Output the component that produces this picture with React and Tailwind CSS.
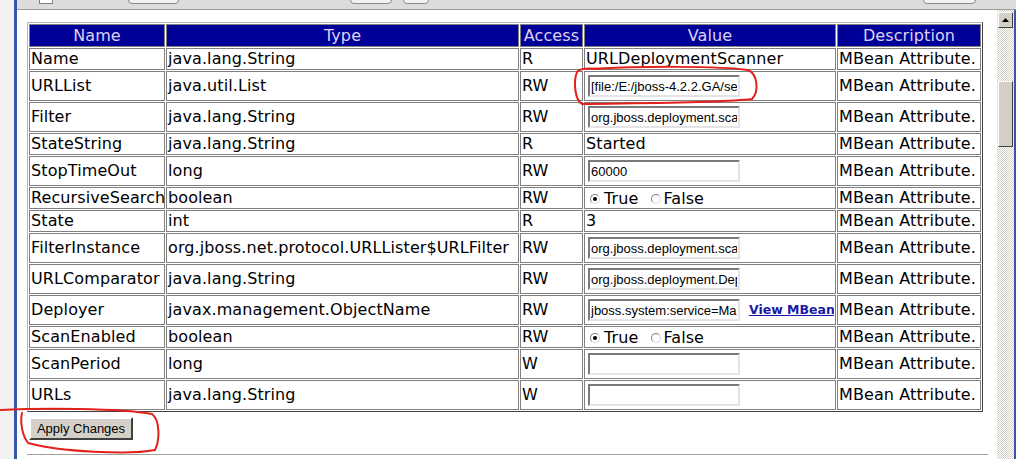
import React from 'react';

const ROWS = [
  { name: 'Name', type: 'java.lang.String', access: 'R', kind: 'text', value: 'URLDeploymentScanner' },
  { name: 'URLList', type: 'java.util.List', access: 'RW', kind: 'input', value: '[file:/E:/jboss-4.2.2.GA/server/default/deploy/]' },
  { name: 'Filter', type: 'java.lang.String', access: 'RW', kind: 'input', value: 'org.jboss.deployment.scanner.DeploymentFilter' },
  { name: 'StateString', type: 'java.lang.String', access: 'R', kind: 'text', value: 'Started' },
  { name: 'StopTimeOut', type: 'long', access: 'RW', kind: 'input', value: '60000' },
  { name: 'RecursiveSearch', type: 'boolean', access: 'RW', kind: 'radio' },
  { name: 'State', type: 'int', access: 'R', kind: 'text', value: '3' },
  { name: 'FilterInstance', type: 'org.jboss.net.protocol.URLLister$URLFilter', access: 'RW', kind: 'input', value: 'org.jboss.deployment.scanner.DeploymentFilter@1a2b3c' },
  { name: 'URLComparator', type: 'java.lang.String', access: 'RW', kind: 'input', value: 'org.jboss.deployment.DeploymentSorter' },
  { name: 'Deployer', type: 'javax.management.ObjectName', access: 'RW', kind: 'input', value: 'jboss.system:service=MainDeployer', link: true },
  { name: 'ScanEnabled', type: 'boolean', access: 'RW', kind: 'radio' },
  { name: 'ScanPeriod', type: 'long', access: 'W', kind: 'input', value: '' },
  { name: 'URLs', type: 'java.lang.String', access: 'W', kind: 'input', value: '' },
];

const cell = 'border border-[#808080] px-[1px] py-0 align-middle whitespace-nowrap text-left leading-[20px]';
const head = 'border border-[#808080] h-[23px] px-[1px] py-0 bg-[#000099] text-[#dcd2f0] font-normal text-center leading-[20px]';

function Radio({ checked }) {
  return (
    <span className="flex items-center justify-center w-[10px] h-[10px] shrink-0 rounded-full border border-t-[#808080] border-l-[#808080] border-b-[#d8d8d8] border-r-[#d8d8d8] bg-white">
      {checked && <span className="w-[4px] h-[4px] rounded-full bg-black" />}
    </span>
  );
}

function TextBox({ value }) {
  return (
    <input
      readOnly
      value={value}
      className="w-[152px] h-[22px] shrink-0 border-2 border-t-[#7a7a7a] border-l-[#7a7a7a] border-b-[#e4e4e4] border-r-[#e4e4e4] bg-white px-[1px] text-[13px] tracking-normal text-black font-['Liberation_Sans',Arial,sans-serif] outline-none"
    />
  );
}

function ValueCell({ row }) {
  if (row.kind === 'text') return <span>{row.value}</span>;
  if (row.kind === 'radio') {
    return (
      <div className="flex items-center h-[20px] ml-[4px] pt-[1px]">
        <Radio checked />
        <span className="ml-[4px]">True</span>
        <span className="ml-[13px]"><Radio /></span>
        <span className="ml-[2px]">False</span>
      </div>
    );
  }
  return (
    <div className="flex items-center h-[28px] ml-[2px] overflow-hidden">
      <TextBox value={row.value} />
      {row.link && (
        <a href="#" className="ml-[9px] text-[12.5px] tracking-normal font-bold text-[#1a1aa6] underline">View MBean</a>
      )}
    </div>
  );
}

export default function App() {
  return (
    <div className="relative w-[1016px] h-[459px] overflow-hidden flex bg-white font-['DejaVu_Sans',Verdana,sans-serif] text-black">
      <div className="w-[14px] bg-[#f2f2f2]" />
      <div className="w-[3px] bg-[#3656a8]" />

      <div className="flex-1 flex flex-col min-w-0">
        {/* toolbar strip, only its bottom edge shows */}
        <div className="h-[10px] shrink-0 bg-[#dcdcdc] border-b border-[#9a9a9a] flex items-end overflow-hidden">
          <div className="ml-[22px] mb-[5px] w-[14px] h-[14px] shrink-0 bg-white border border-[#808080]" />
          <div className="ml-[75px] mb-[5px] w-[51px] h-[16px] shrink-0 bg-[#f2f2f2] border border-[#8a8a8a] rounded-b-[4px]" />
          <div className="ml-[171px] mb-[5px] w-[42px] h-[16px] shrink-0 bg-[#f2f2f2] border border-[#8a8a8a] rounded-b-[4px]" />
          <div className="ml-[11px] mb-[5px] w-[26px] h-[16px] shrink-0 bg-[#f2f2f2] border border-[#8a8a8a] rounded-b-[4px]" />
          <div className="ml-[494px] mb-[5px] w-[53px] h-[16px] shrink-0 bg-[#f2f2f2] border border-[#8a8a8a] rounded-b-[4px]" />
        </div>

        <div className="flex-1 flex min-h-0">
          <div className="w-[980px] pl-[10px] pt-[12px] flex flex-col">
            <table className="table-fixed w-[956px] border-separate border-spacing-[1px] border border-t-[#b4b4b4] border-l-[#b4b4b4] border-b-[#404040] border-r-[#404040] text-[16px] tracking-[0.1px]">
              <thead>
                <tr>
                  <th className={head + ' w-[136px]'}>Name</th>
                  <th className={head + ' w-[353px]'}>Type</th>
                  <th className={head + ' w-[63px]'}>Access</th>
                  <th className={head + ' w-[252px]'}>Value</th>
                  <th className={head + ' w-[144px]'}>Description</th>
                </tr>
              </thead>
              <tbody>
                {ROWS.map(row => {
                  const h = row.kind === 'input' ? 'h-[30px]' : 'h-[22px]';
                  return (
                    <tr key={row.name}>
                      <td className={cell + ' ' + h}>{row.name}</td>
                      <td className={cell + ' ' + h}>{row.type}</td>
                      <td className={cell + ' ' + h}>{row.access}</td>
                      <td className={cell + ' ' + h}><ValueCell row={row} /></td>
                      <td className={cell + ' ' + h}>MBean Attribute.</td>
                    </tr>
                  );
                })}
              </tbody>
            </table>

            <div className="mt-[4px] ml-[2px]">
              <button className="w-[104px] h-[23px] bg-[#d4d0c8] border-2 border-t-white border-l-white border-b-[#404040] border-r-[#404040] text-[13px] font-['Liberation_Sans',Arial,sans-serif] text-black leading-none">
                Apply Changes
              </button>
            </div>

            <div className="mt-[14px] w-[961px] border-t border-[#a0a0a0]" />
          </div>

          {/* scrollbar */}
          <div className="w-[17px] shrink-0 flex flex-col items-center bg-[repeating-conic-gradient(#d4d0c8_0%_25%,#ffffff_0%_50%)] bg-[length:2px_2px]">
            <div className="mt-[2px] w-[15px] h-[16px] bg-[#d4d0c8] border border-t-white border-l-white border-b-[#404040] border-r-[#404040] flex items-center justify-center">
              <svg width="7" height="4" viewBox="0 0 7 4"><path d="M3.5 0 L7 4 L0 4 Z" fill="#000" /></svg>
            </div>
            <div className="mt-[53px] w-[15px] h-[66px] bg-[#d4d0c8] border border-t-white border-l-white border-b-[#404040] border-r-[#404040]" />
          </div>
          <div className="w-[2px] shrink-0 bg-[#3656a8]" />
        </div>
      </div>

      {/* red hand-drawn marks */}
      <svg className="absolute inset-0 pointer-events-none" width="1016" height="459" viewBox="0 0 1016 459" fill="none">
        <path
          d="M592 69 C640 66 720 66 748 70 C758 74 759 92 752 99 C720 103 640 103 582 104 C575 100 573 82 577 72 C580 68 588 68 600 69"
          stroke="#e3211b" strokeWidth="2" strokeLinecap="round"
        />
        <path
          d="M0 410 C40 408 120 408 152 414 C160 420 160 440 155 450 C130 455 60 452 28 443 C22 435 20 422 22 413"
          stroke="#e3211b" strokeWidth="2" strokeLinecap="round"
        />
      </svg>
    </div>
  );
}
